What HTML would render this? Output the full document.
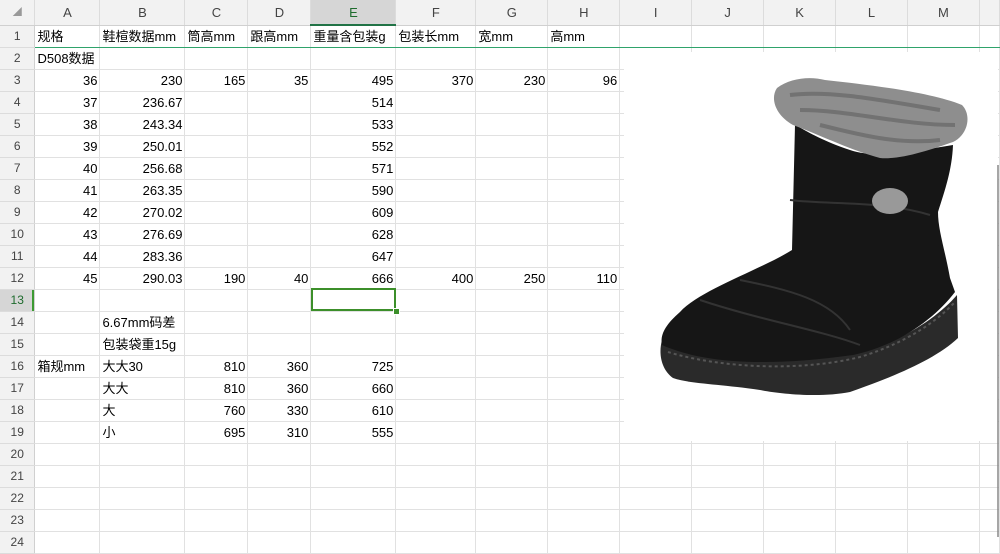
<!DOCTYPE html>
<html><head><meta charset="utf-8">
<style>
body{margin:0;width:1000px;height:537px;overflow:hidden;background:#fff;font-family:"Liberation Sans","Noto Sans CJK SC",sans-serif;position:relative}
table{border-collapse:collapse;table-layout:fixed;position:absolute;left:0;top:0}
td{border-right:1px solid #e1e1e1;border-bottom:1px solid #e1e1e1;height:21px;padding:0 2px;font-size:13px;white-space:nowrap;overflow:visible;color:#000;line-height:21px}
tr.h td{height:24px;background:#f2f2f2;color:#444;text-align:center;border-right:1px solid #dcdcdc;border-bottom:1px solid #d0d0d0;font-size:13px}
td.r{background:#f2f2f2;color:#444;text-align:center;border-right:1px solid #d0d0d0;border-bottom:1px solid #dcdcdc;font-size:12px;padding:0}
td.n{text-align:right}
tr.h td.sel{background:#d6d6d6;color:#1e6b2d;border-bottom:2px solid #217346}
td.r.sel{background:#d6d6d6;color:#1e6b2d;box-shadow:inset -2px 0 0 #3c9a32}
</style></head><body>
<table>
<colgroup><col style="width:35px"><col style="width:65px"><col style="width:85px"><col style="width:63px"><col style="width:63px"><col style="width:85px"><col style="width:80px"><col style="width:72px"><col style="width:72px"><col style="width:72px"><col style="width:72px"><col style="width:72px"><col style="width:72px"><col style="width:72px"><col style="width:20px"></colgroup>
<tr class="h"><td style="font-size:9px;color:#999">◢</td><td>A</td><td>B</td><td>C</td><td>D</td><td class="sel">E</td><td>F</td><td>G</td><td>H</td><td>I</td><td>J</td><td>K</td><td>L</td><td>M</td><td></td></tr>
<tr><td class="r">1</td><td>规格</td><td>鞋楦数据mm</td><td>筒高mm</td><td>跟高mm</td><td>重量含包装g</td><td>包装长mm</td><td>宽mm</td><td>高mm</td><td></td><td></td><td></td><td></td><td></td><td></td></tr>
<tr><td class="r">2</td><td>D508数据</td><td></td><td></td><td></td><td></td><td></td><td></td><td></td><td></td><td></td><td></td><td></td><td></td><td></td></tr>
<tr><td class="r">3</td><td class="n">36</td><td class="n">230</td><td class="n">165</td><td class="n">35</td><td class="n">495</td><td class="n">370</td><td class="n">230</td><td class="n">96</td><td></td><td></td><td></td><td></td><td></td><td></td></tr>
<tr><td class="r">4</td><td class="n">37</td><td class="n">236.67</td><td></td><td></td><td class="n">514</td><td></td><td></td><td></td><td></td><td></td><td></td><td></td><td></td><td></td></tr>
<tr><td class="r">5</td><td class="n">38</td><td class="n">243.34</td><td></td><td></td><td class="n">533</td><td></td><td></td><td></td><td></td><td></td><td></td><td></td><td></td><td></td></tr>
<tr><td class="r">6</td><td class="n">39</td><td class="n">250.01</td><td></td><td></td><td class="n">552</td><td></td><td></td><td></td><td></td><td></td><td></td><td></td><td></td><td></td></tr>
<tr><td class="r">7</td><td class="n">40</td><td class="n">256.68</td><td></td><td></td><td class="n">571</td><td></td><td></td><td></td><td></td><td></td><td></td><td></td><td></td><td></td></tr>
<tr><td class="r">8</td><td class="n">41</td><td class="n">263.35</td><td></td><td></td><td class="n">590</td><td></td><td></td><td></td><td></td><td></td><td></td><td></td><td></td><td></td></tr>
<tr><td class="r">9</td><td class="n">42</td><td class="n">270.02</td><td></td><td></td><td class="n">609</td><td></td><td></td><td></td><td></td><td></td><td></td><td></td><td></td><td></td></tr>
<tr><td class="r">10</td><td class="n">43</td><td class="n">276.69</td><td></td><td></td><td class="n">628</td><td></td><td></td><td></td><td></td><td></td><td></td><td></td><td></td><td></td></tr>
<tr><td class="r">11</td><td class="n">44</td><td class="n">283.36</td><td></td><td></td><td class="n">647</td><td></td><td></td><td></td><td></td><td></td><td></td><td></td><td></td><td></td></tr>
<tr><td class="r">12</td><td class="n">45</td><td class="n">290.03</td><td class="n">190</td><td class="n">40</td><td class="n">666</td><td class="n">400</td><td class="n">250</td><td class="n">110</td><td></td><td></td><td></td><td></td><td></td><td></td></tr>
<tr><td class="r sel">13</td><td></td><td></td><td></td><td></td><td></td><td></td><td></td><td></td><td></td><td></td><td></td><td></td><td></td><td></td></tr>
<tr><td class="r">14</td><td></td><td>6.67mm码差</td><td></td><td></td><td></td><td></td><td></td><td></td><td></td><td></td><td></td><td></td><td></td><td></td></tr>
<tr><td class="r">15</td><td></td><td>包装袋重15g</td><td></td><td></td><td></td><td></td><td></td><td></td><td></td><td></td><td></td><td></td><td></td><td></td></tr>
<tr><td class="r">16</td><td>箱规mm</td><td>大大30</td><td class="n">810</td><td class="n">360</td><td class="n">725</td><td></td><td></td><td></td><td></td><td></td><td></td><td></td><td></td><td></td></tr>
<tr><td class="r">17</td><td></td><td>大大</td><td class="n">810</td><td class="n">360</td><td class="n">660</td><td></td><td></td><td></td><td></td><td></td><td></td><td></td><td></td><td></td></tr>
<tr><td class="r">18</td><td></td><td>大</td><td class="n">760</td><td class="n">330</td><td class="n">610</td><td></td><td></td><td></td><td></td><td></td><td></td><td></td><td></td><td></td></tr>
<tr><td class="r">19</td><td></td><td>小</td><td class="n">695</td><td class="n">310</td><td class="n">555</td><td></td><td></td><td></td><td></td><td></td><td></td><td></td><td></td><td></td></tr>
<tr><td class="r">20</td><td></td><td></td><td></td><td></td><td></td><td></td><td></td><td></td><td></td><td></td><td></td><td></td><td></td><td></td></tr>
<tr><td class="r">21</td><td></td><td></td><td></td><td></td><td></td><td></td><td></td><td></td><td></td><td></td><td></td><td></td><td></td><td></td></tr>
<tr><td class="r">22</td><td></td><td></td><td></td><td></td><td></td><td></td><td></td><td></td><td></td><td></td><td></td><td></td><td></td><td></td></tr>
<tr><td class="r">23</td><td></td><td></td><td></td><td></td><td></td><td></td><td></td><td></td><td></td><td></td><td></td><td></td><td></td><td></td></tr>
<tr><td class="r">24</td><td></td><td></td><td></td><td></td><td></td><td></td><td></td><td></td><td></td><td></td><td></td><td></td><td></td><td></td></tr>
</table>
<div style="position:absolute;left:35px;top:47px;width:965px;height:1px;background:#2fa36b"></div>
<div style="position:absolute;left:311px;top:288px;width:81px;height:19px;border:2px solid #3c8f2a"></div>
<div style="position:absolute;left:393px;top:308px;width:5px;height:5px;background:#3c8f2a;border:1px solid #fff"></div>
<svg style="position:absolute;left:0;top:0" width="1000" height="537">
<rect x="624" y="52" width="374" height="389" fill="#fff"/>
<line x1="998" y1="165" x2="998" y2="537" stroke="#888" stroke-width="1.5"/>
<path d="M662,340 C665,345 760,368 853,352 C900,345 940,315 957,295 L958,338 C935,360 890,378 850,392 C820,398 780,394 760,390 C720,384 690,384 673,378 C662,370 658,355 662,340 Z" fill="#2a2a2a"/>
<path d="M795,125 L792,250 C760,270 700,290 680,312 C665,325 660,335 662,345 C700,362 760,368 853,355 C900,345 935,318 955,292 L950,278 C945,250 938,230 938,212 C945,190 952,170 953,145 C920,150 880,160 850,150 C820,140 805,130 795,125 Z" fill="#161616"/>
<path d="M668,352 C720,368 800,372 860,357 C910,342 940,318 955,302" fill="none" stroke="#555" stroke-width="2" stroke-dasharray="3 3"/>
<path d="M700,300 C760,320 820,330 860,345 M740,280 C790,290 830,300 850,330 M790,200 C830,205 880,200 930,215" stroke="#333" stroke-width="2" fill="none"/>
<path d="M777,88 C790,78 810,76 825,80 C870,85 930,92 962,105 C972,115 968,135 953,142 C930,150 900,160 880,158 C850,150 820,135 793,125 C775,115 770,98 777,88 Z" fill="#8e8e8e"/>
<path d="M790,95 C830,90 880,100 940,110 M800,110 C850,110 900,125 955,125 M820,125 C860,135 900,145 940,140" stroke="#555" stroke-width="4" fill="none" opacity=".5"/>
<ellipse cx="890" cy="201" rx="18" ry="13" fill="#999"/>
</svg>
</body></html>
